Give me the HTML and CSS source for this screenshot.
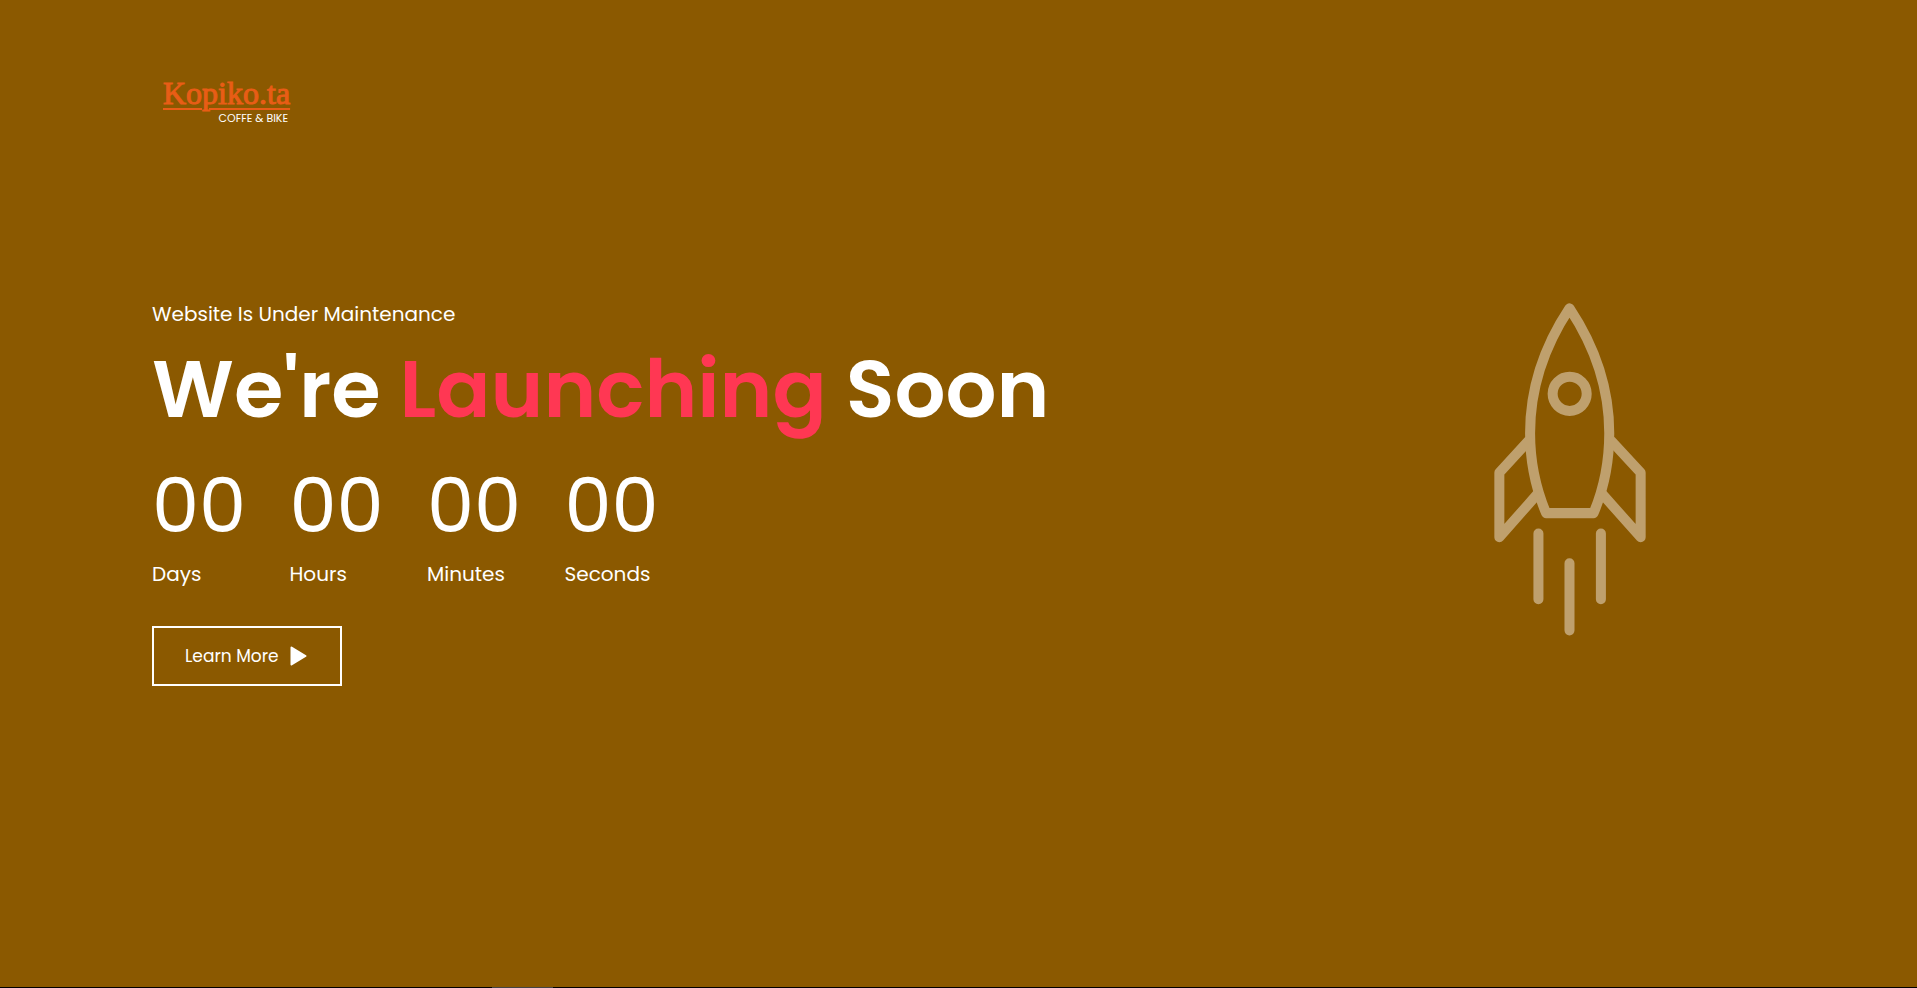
FILE: index.html
```
<!DOCTYPE html>
<html lang="en">
<head>
<meta charset="utf-8">
<meta name="viewport" content="width=device-width, initial-scale=1">
<title>Kopiko.ta</title>
<link rel="stylesheet" href="styles.css">
</head>
<body>
<div class="page">
  <header class="header">
    <a class="logo" href="#">
      <span class="logo-name">Kopiko.ta</span>
      <span class="logo-tag">COFFE &amp; BIKE</span>
    </a>
  </header>
  <main class="main">
    <section class="content">
      <p class="lead">Website Is Under Maintenance</p>
      <h1 class="title">We're <span class="accent">Launching</span> Soon</h1>
      <div class="countdown">
        <div class="unit"><p class="number">00</p><span class="label">Days</span></div>
        <div class="unit"><p class="number">00</p><span class="label">Hours</span></div>
        <div class="unit"><p class="number">00</p><span class="label">Minutes</span></div>
        <div class="unit"><p class="number">00</p><span class="label">Seconds</span></div>
      </div>
      <button class="more" type="button">Learn More
        <svg class="play" viewBox="0 0 17 20" aria-hidden="true"><path d="M1.500 1.500 15.500 10 1.500 18.500Z"/></svg>
      </button>
    </section>
    <svg class="rocket" viewBox="73 40 455 996" aria-hidden="true">
      <path d="M299 56C220 175 181 300 181 430C181 520 200 600 229 669H371C400 600 418 520 418 430C418 300 378 175 299 56Z"/>
      <circle cx="299.500" cy="312" r="51"/>
      <path d="M176 453 89 548V741L202 613M424 453 512 548V741L398 613"/>
      <path d="M206 730V927M299 819V1020M393 730V927"/>
    </svg>
  </main>
  <footer class="edge"><div class="thumb"></div></footer>
</div>
</body>
</html>
```
FILE: styles.css
```
* {
  box-sizing: border-box;
  margin: 0;
  padding: 0;
}

body {
  background: #8b5900;
  color: #fff;
  font-family: Poppins, Inter, "Open Sans", sans-serif;
}

.page {
  min-height: 100vh;
  display: grid;
  grid-template-rows: 1fr auto 1fr 1px;
}

.header {
  padding: 75px 152px 0;
}

.logo {
  display: inline-flex;
  flex-direction: column;
  margin-left: 11px;
  color: #e85d16;
  text-decoration: none;
}

.logo-name {
  font: 32px/36px "Liberation Serif", serif;
  -webkit-text-stroke: 1px #e85d16;
  text-decoration: underline 2px;
  text-underline-offset: 4px;
}

.logo-tag {
  align-self: flex-end;
  margin-right: 2px;
  color: #fff;
  font: 11px/14px Poppins, Inter, sans-serif;
}

.main {
  grid-row: 2;
  display: flex;
  justify-content: space-between;
  align-items: flex-start;
  padding: 0 271px 2px 152px;
}

.lead {
  font-size: 20px;
  line-height: 30px;
}

.title {
  font-size: 80px;
  font-weight: 600;
  line-height: 120px;
}

.countdown {
  display: grid;
  grid-template-columns: repeat(4, 1fr);
  max-width: 550px;
  padding-top: 12px;
}

.accent {
  color: #ff3753;
}

.number {
  font-size: 75px;
  line-height: 90px;
}

.label {
  display: block;
  margin-top: 8px;
  font-size: 20px;
  line-height: 30px;
}

.more {
  display: flex;
  align-items: center;
  gap: 11px;
  width: max-content;
  margin-top: 37px;
  padding: 16px 33px 16px 31px;
  border: 2px solid #fff;
  background: transparent;
  color: #fff;
  font-family: inherit;
  font-size: 17px;
  line-height: 24px;
  cursor: pointer;
}

.play {
  width: 17px;
  height: 20px;
  fill: #fff;
  stroke: #fff;
  stroke-width: 2;
  stroke-linejoin: round;
}

.rocket {
  width: 152px;
  margin-top: 4px;
  fill: none;
  stroke: #bfa06d;
  stroke-width: 30;
  stroke-linecap: round;
  stroke-linejoin: round;
}

.edge {
  grid-row: 4;
  background: #000;
  padding-left: 492px;
}

.thumb {
  width: 61px;
  height: 1px;
  background: #444;
}
```
